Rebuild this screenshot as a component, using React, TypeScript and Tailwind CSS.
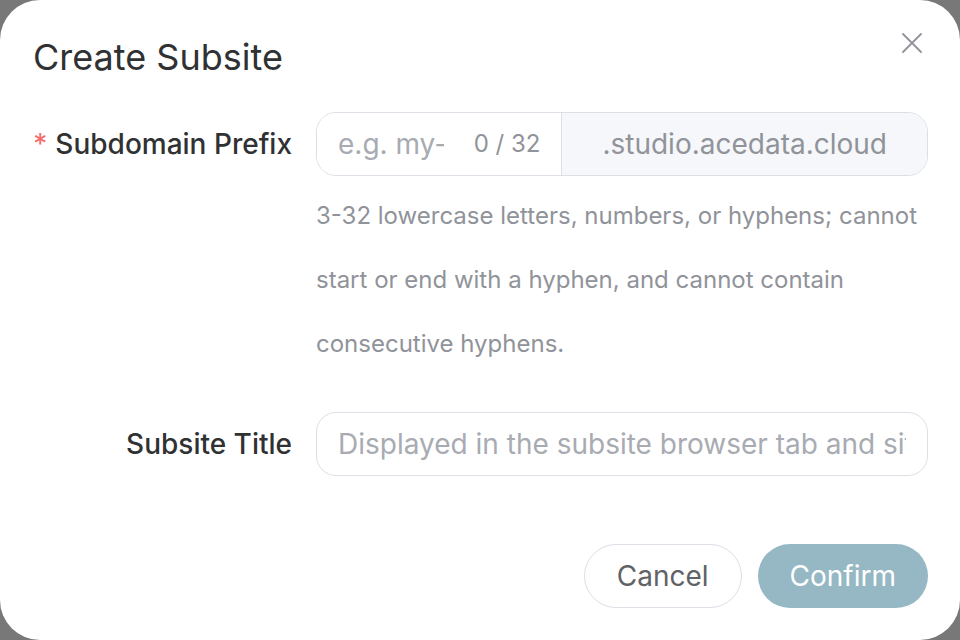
import React from "react";

export default function App() {
  return (
    <div className="w-[960px] h-[640px] bg-[#787878] font-[Inter,sans-serif]">
      <div className="relative h-full rounded-[40px] bg-white">
        <div className="px-[33px] pt-[33px]">
          <h2 className="text-[36px] leading-[48px] font-normal text-[#303133]">Create Subsite</h2>
        </div>
        <button className="absolute left-[900px] top-[31px] w-6 h-6 text-[#909399]" aria-label="Close">
          <svg viewBox="0 0 24 24" width="24" height="24" fill="none" stroke="currentColor" strokeWidth="1.8" strokeLinecap="round">
            <path d="M3 3L21 21M21 3L3 21" />
          </svg>
        </button>

        <div className="px-8 mt-[31px]">
          {/* Row 1 */}
          <div className="flex">
            <div className="w-[260px] shrink-0 h-16 flex items-center justify-end text-[28px] font-medium text-[#303133]">
              <span className="text-[#f56c6c] mr-2 font-normal">*</span>
              <span>Subdomain Prefix</span>
            </div>
            <div className="ml-6 flex-1 min-w-0">
              <div className="flex h-16 rounded-[20px] border border-[#dcdfe6] overflow-hidden">
                <div className="flex-1 flex items-center pl-[21px] pr-[21px] bg-white min-w-0">
                  <input
                    className="w-[106px] bg-transparent outline-none text-[28px] text-[#606266] placeholder:text-[#a8abb2]"
                    placeholder="e.g. my-site"
                  />
                  <span className="ml-auto text-[24px] text-[#909399]">0 / 32</span>
                </div>
                <div className="flex items-center px-10 bg-[#f5f7fa] border-l border-[#dcdfe6] text-[28px] text-[#909399]">
                  .studio.acedata.cloud
                </div>
              </div>
              <p className="mt-2 text-[24px] leading-[64px] text-[#909399]">
                3-32 lowercase letters, numbers, or hyphens; cannot start or end with a hyphen, and cannot contain consecutive hyphens.
              </p>
            </div>
          </div>

          {/* Row 2 */}
          <div className="flex mt-[36px]">
            <div className="w-[260px] shrink-0 h-16 flex items-center justify-end text-[28px] font-medium text-[#303133]">
              <span>Subsite Title</span>
            </div>
            <div className="ml-6 flex-1 min-w-0">
              <div className="flex items-center h-16 rounded-[20px] border border-[#dcdfe6] px-[21px] overflow-hidden">
                <input
                  className="w-full bg-transparent outline-none text-[28px] text-[#606266] placeholder:text-[#a8abb2]"
                  placeholder="Displayed in the subsite browser tab and site header"
                />
              </div>
            </div>
          </div>
        </div>

        <div className="flex justify-end gap-4 px-8 mt-[68px]">
          <button className="h-16 px-8 rounded-full border border-[#dcdfe6] bg-white text-[28px] text-[#606266]">
            Cancel
          </button>
          <button className="h-16 px-8 rounded-full bg-[#95b8c4] text-[28px] text-white">
            Confirm
          </button>
        </div>
      </div>
    </div>
  );
}
